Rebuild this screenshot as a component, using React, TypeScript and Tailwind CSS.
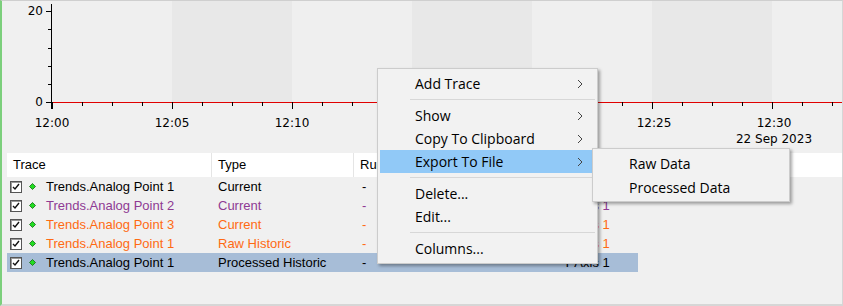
import React from "react";

type Row = {
  trace: string;
  type: string;
  color: string;
  selected?: boolean;
};

const ROWS: Row[] = [
  { trace: "Trends.Analog Point 1", type: "Current", color: "text-[#000000]" },
  { trace: "Trends.Analog Point 2", type: "Current", color: "text-[#8e3a93]" },
  { trace: "Trends.Analog Point 3", type: "Current", color: "text-[#ff6a13]" },
  { trace: "Trends.Analog Point 1", type: "Raw Historic", color: "text-[#ff6a13]" },
  { trace: "Trends.Analog Point 1", type: "Processed Historic", color: "text-[#000000]", selected: true },
];

// 12:15 and 12:20 sit under the context menu, so they are left out
const X_LABELS = [
  { x: 50, t: "12:00" },
  { x: 170, t: "12:05" },
  { x: 290, t: "12:10" },
  { x: 652, t: "12:25" },
  { x: 772, t: "12:30" },
];

function Chart() {
  const bands = [170, 410, 650];
  const minor: number[] = [];
  for (let x = 50; x < 843; x += 30) minor.push(x);
  return (
    <svg width="841" height="150" className="block" style={{ fontFamily: "'DejaVu Sans', sans-serif" }}>
      <rect x="49" y="0" width="800" height="101" fill="#efefef" />
      {bands.map((b) => (
        <rect key={b} x={b} y="0" width="120" height="101" fill="#e8e8e8" />
      ))}
      <line x1="49.5" y1="3" x2="49.5" y2="108" stroke="#000" />
      {[10, 28, 47, 65, 83, 101].map((y, i) => (
        <line key={y} x1={i === 0 || i === 5 ? 44 : 46} y1={y + 0.5} x2="49" y2={y + 0.5} stroke="#000" />
      ))}
      <text x="41" y="14" fontSize="12" textAnchor="end" fill="#000">20</text>
      <text x="41" y="105" fontSize="12" textAnchor="end" fill="#000">0</text>
      <line x1="50" y1="101.5" x2="843" y2="101.5" stroke="#e00000" />
      {minor.map((x, i) => (
        <line key={x} x1={x + 0.5} y1="101" x2={x + 0.5} y2={i % 4 === 0 ? 108 : 105} stroke="#000" />
      ))}
      {X_LABELS.map((l) => (
        <text key={l.t} x={l.x} y="126" fontSize="12" textAnchor="middle" fill="#000">
          {l.t}
        </text>
      ))}
      <text x="772" y="142" fontSize="12" textAnchor="middle" fill="#000">22 Sep 2023</text>
    </svg>
  );
}

function Chevron() {
  return (
    <svg width="6" height="10" viewBox="0 0 6 10" className="shrink-0">
      <path d="M1 1 L5 5 L1 9" fill="none" stroke="#444" strokeWidth="1" />
    </svg>
  );
}

function Check() {
  return (
    <span className="flex h-[12px] w-[12px] items-center justify-center border border-[#555] bg-white shadow-[inset_1px_1px_0_#999]">
      <svg width="8" height="8" viewBox="0 0 8 8">
        <path d="M1 4 L3 6 L7 1" fill="none" stroke="#111" strokeWidth="1.4" />
      </svg>
    </span>
  );
}

function Diamond() {
  return (
    <svg width="7" height="7" viewBox="0 0 7 7">
      <path d="M3.5 0.5 L6.5 3.5 L3.5 6.5 L0.5 3.5 Z" fill="#22dd22" stroke="#116611" strokeWidth="0.8" />
    </svg>
  );
}

type MenuItem = { label: string; sub?: boolean; active?: boolean } | "sep";

const MENU: MenuItem[] = [
  { label: "Add Trace", sub: true },
  "sep",
  { label: "Show", sub: true },
  { label: "Copy To Clipboard", sub: true },
  { label: "Export To File", sub: true, active: true },
  "sep",
  { label: "Delete..." },
  { label: "Edit..." },
  "sep",
  { label: "Columns..." },
];

export default function App() {
  return (
    <div
      className="relative h-[306px] w-[843px] overflow-hidden border-t border-l-2 border-r border-b-2 border-t-[#cfcfcf] border-l-[#7ccf7c] border-r-[#d6d6d6] border-b-[#d6d6d6] bg-[#f0f0f0]"
      style={{ fontFamily: "'Liberation Sans', Arial, sans-serif" }}
    >
      <Chart />

      <div className="ml-[5px] mt-[2px] text-[13px] text-black">
        <div className="flex h-[24px] items-center bg-white">
          <div className="flex h-full w-[205px] items-center border-r border-[#e5e5e5] pl-[6px]">Trace</div>
          <div className="flex h-full w-[142px] items-center border-r border-[#e5e5e5] pl-[6px]">Type</div>
          <div className="flex h-full flex-1 items-center pl-[6px]">Run</div>
        </div>
        {ROWS.map((r, i) => (
          <div
            key={i}
            className={`flex h-[19px] w-[631px] items-center ${r.color} ${r.selected ? "bg-[#a7bdd7]" : ""}`}
          >
            <div className="flex w-[205px] items-center pl-[3px]">
              <Check />
              <span className="ml-[7px]">
                <Diamond />
              </span>
              <span className="ml-[10px]">{r.trace}</span>
            </div>
            <div className="w-[143px] pl-[6px]">{r.type}</div>
            <div className="w-[205px] pl-[7px]">-</div>
            <div className="pl-[3px]">Y Axis 1</div>
          </div>
        ))}
      </div>

      <div
        className="absolute left-[375px] top-[67px] w-[221px] border border-[#cccccc] bg-[#f2f2f2] py-[3px] text-[14px] text-black shadow-[2px_2px_3px_rgba(0,0,0,0.35)]"
        style={{ fontFamily: "'Open Sans', 'Noto Sans', sans-serif" }}
      >
        {MENU.map((m, i) =>
          m === "sep" ? (
            <div key={i} className="flex h-[9px] items-center pl-[32px] pr-[2px]">
              <div className="h-px w-full bg-[#d7d7d7]" />
            </div>
          ) : (
            <div
              key={i}
              className={`mx-[2px] flex h-[23px] items-center justify-between pl-[35px] pr-[12px] ${m.active ? "bg-[#91c9f7]" : ""}`}
            >
              <span>{m.label}</span>
              {m.sub && <Chevron />}
            </div>
          )
        )}
      </div>

      <div
        className="absolute left-[590px] top-[147px] w-[198px] border border-[#cccccc] bg-[#f2f2f2] py-[2px] text-[14px] text-black shadow-[2px_2px_3px_rgba(0,0,0,0.35)]"
        style={{ fontFamily: "'Open Sans', 'Noto Sans', sans-serif" }}
      >
        {["Raw Data", "Processed Data"].map((s) => (
          <div key={s} className="flex h-[24px] items-center pl-[36px]">
            {s}
          </div>
        ))}
      </div>
    </div>
  );
}
